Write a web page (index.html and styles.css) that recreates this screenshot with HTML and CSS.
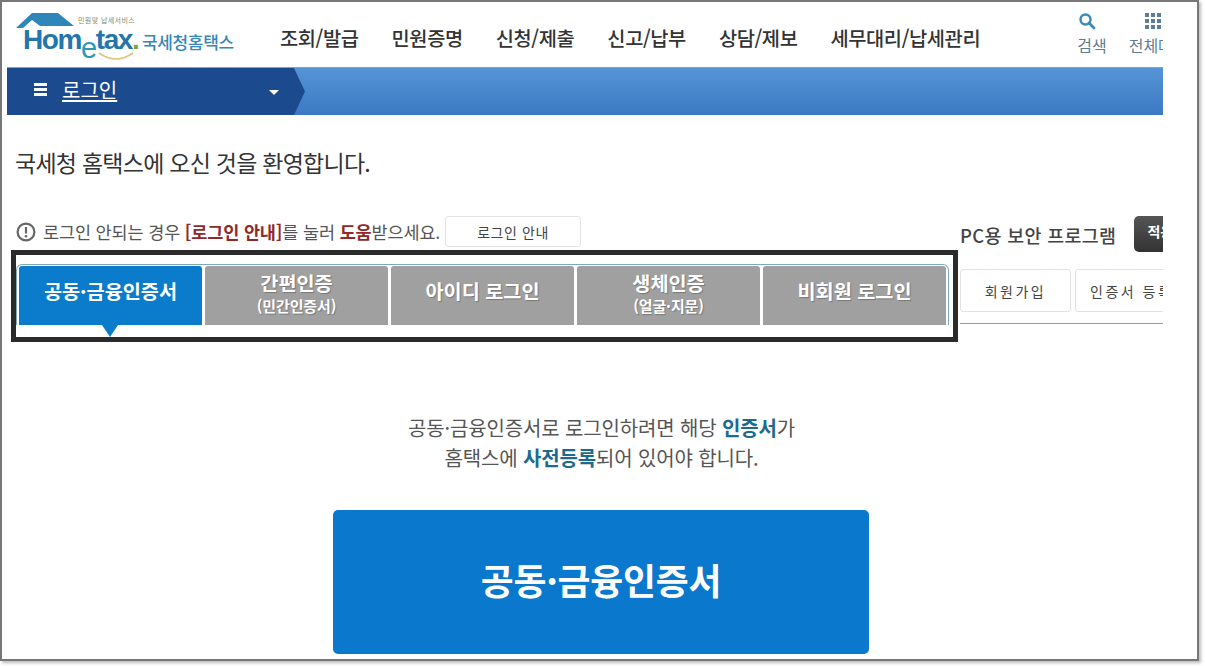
FILE: index.html
```html
<!DOCTYPE html>
<html lang="ko">
<head>
<meta charset="utf-8">
<title>국세청 홈택스 로그인</title>
<link rel="stylesheet" href="styles.css">
</head>
<body>
<div class="frame">
  <div class="page">
    <header class="topbar">
      <a class="logo">
        <svg class="logo-roof" width="60" height="18" viewBox="0 0 60 18"><path d="M0 16 L16 1 H42 L58 14 H24 L16 8 L7 16 Z" fill="#2f86b8"/></svg>
        <svg class="logo-smile" width="36" height="10" viewBox="0 0 36 10"><path d="M1 1 Q18 13 35 1" fill="none" stroke="#e0c27a" stroke-width="1.6"/></svg>
        <span class="logo-tag">민원맞 납세서비스</span>
        <span class="logo-en">Hom<span class="logo-e">e</span>tax<span class="logo-dot">.</span></span>
        <span class="logo-ko">국세청홈택스</span>
      </a>
      <nav class="gnb">
        <span>조회/발급</span><span>민원증명</span><span>신청/제출</span><span>신고/납부</span><span>상담/제보</span><span>세무대리/납세관리</span>
      </nav>
      <div class="tools">
        <div class="tool">
          <svg width="18" height="18" viewBox="0 0 18 18"><circle cx="7.5" cy="7.5" r="5" fill="none" stroke="#3b8bb5" stroke-width="2.4"/><path d="M11 11l5 5" stroke="#3b8bb5" stroke-width="2.8" stroke-linecap="round"/></svg>
          <span>검색</span>
        </div>
        <div class="tool">
          <svg width="18" height="18" viewBox="0 0 18 18" fill="#5c7f99"><rect x="1" y="1" width="4" height="4"/><rect x="7" y="1" width="4" height="4"/><rect x="13" y="1" width="4" height="4"/><rect x="1" y="7" width="4" height="4"/><rect x="7" y="7" width="4" height="4"/><rect x="13" y="7" width="4" height="4"/><rect x="1" y="13" width="4" height="4"/><rect x="7" y="13" width="4" height="4"/><rect x="13" y="13" width="4" height="4"/></svg>
          <span>전체메뉴</span>
        </div>
      </div>
    </header>

    <div class="crumb">
      <div class="crumb-current">
        <span class="burger"><i></i><i></i><i></i></span>
        <span class="crumb-title">로그인</span>
        <span class="crumb-caret"></span>
      </div>
    </div>

    <h1 class="welcome">국세청 홈택스에 오신 것을 환영합니다.</h1>

    <section class="login-area">
      <div class="login-left">
        <div class="help">
          <svg width="20" height="20" viewBox="0 0 20 20"><circle cx="10" cy="10" r="8.4" fill="none" stroke="#666" stroke-width="2.2"/><path d="M10 5v6.5" stroke="#666" stroke-width="2.2"/><circle cx="10" cy="14.3" r="1.3" fill="#666"/></svg>
          <p>로그인 안되는 경우 <b>[로그인 안내]</b>를 눌러 <b>도움</b>받으세요.</p>
          <button class="guide-btn">로그인 안내</button>
        </div>
        <div class="tab-box">
          <div class="tabs">
            <div class="tab single active">공동·금융인증서</div>
            <div class="tab">간편인증<small>(민간인증서)</small></div>
            <div class="tab single">아이디 로그인</div>
            <div class="tab">생체인증<small>(얼굴·지문)</small></div>
            <div class="tab single">비회원 로그인</div>
          </div>
        </div>
      </div>
      <div class="login-right">
        <div class="security">
          <span>PC용 보안 프로그램</span>
          <button class="apply-btn">적용</button>
        </div>
        <div class="actions">
          <button class="action-btn join">회원가입</button>
          <button class="action-btn cert">인증서 등록</button>
        </div>
      </div>
    </section>

    <p class="notice">공동·금융인증서로 로그인하려면 해당 <b>인증서</b>가<br>홈택스에 <b>사전등록</b>되어 있어야 합니다.</p>
    <button class="cert-login">공동·금융인증서</button>
  </div>
</div>
</body>
</html>
```

FILE: styles.css
```css
* { box-sizing: border-box; }
html, body { margin: 0; height: 100%; background: #fff; overflow: hidden; }
body {
  font-family: "Noto Sans CJK KR", "Noto Sans", sans-serif;
  color: #333;
}
.frame {
  width: 1199px;
  height: 661px;
  margin: 0;
  border: 2px solid #777;
  box-shadow: 2px 2px 3px #bbb;
  padding-left: 5px;
  background: #fff;
  overflow: hidden;
}
.page { width: 1156px; height: 100%; overflow: hidden; }

/* header */
.topbar { display: flex; height: 65px; align-items: flex-start; }
.logo { position: relative; display: block; width: 263px; height: 65px; flex: none; }
.logo-roof { position: absolute; left: 9px; top: 10px; }
.logo-smile { position: absolute; left: 91px; top: 50px; }
.logo-tag { position: absolute; left: 71px; top: 14px; font-size: 7px; color: #7a8a70; letter-spacing: .4px; white-space: nowrap; line-height: 9px; }
.logo-en {
  position: absolute; left: 16px; top: 25px;
  font: 700 28px/24px "Liberation Sans", sans-serif;
  letter-spacing: -1.4px; color: #2276ab; white-space: nowrap;
}
.logo-e { color: #2a9bb7; font-size: 29px; position: relative; top: 9px; font-weight: 400; }
.logo-dot { color: #7ea63a; }
.logo-ko {
  position: absolute; left: 135px; top: 28px;
  font-size: 17px; line-height: 24px; letter-spacing: -.35px; color: #3587b8; font-weight: 500; white-space: nowrap;
}
.gnb {
  display: flex; gap: 33px; margin-top: 22px; margin-left: 10px;
  font-size: 19.8px; line-height: 27px; font-weight: 500; color: #333; letter-spacing: -.4px;
  white-space: nowrap; flex: none;
}
.tools { display: flex; gap: 22px; margin-left: 97px; margin-top: 10px; flex: none; }
.tool { display: flex; flex-direction: column; align-items: center; gap: 5px; font-size: 16px; line-height: 21px; color: #5f7d92; white-space: nowrap; }
.tool svg { display: block; margin-right: 10px; }

/* location bar */
.crumb {
  height: 48px;
  background: linear-gradient(#5594d6, #3b7ac2);
  border-top: 1px solid #7da3cc;
}
.crumb-current {
  display: flex; align-items: center;
  width: 298px; height: 100%;
  padding-left: 27px; padding-bottom: 4px;
  background: #1c4a8e;
  clip-path: polygon(0 0, 287px 0, 100% 50%, 287px 100%, 0 100%);
  color: #fff;
}
.burger { display: flex; flex-direction: column; gap: 2px; width: 13px; }
.burger i { display: block; height: 3px; background: #fff; }
.crumb-title {
  margin-left: 15px; font-size: 20px; line-height: 26px;
  text-decoration: underline; text-underline-offset: 2px;
}
.crumb-caret {
  margin-left: 152px; margin-top: 6px; width: 0; height: 0;
  border: 5px solid transparent; border-top: 5px solid #fff; border-bottom: 0;
}

/* title */
.welcome {
  margin: 31px 0 0 8px;
  font-size: 23px; line-height: 32px; font-weight: 400; color: #333; letter-spacing: -.75px;
}

/* login region */
.login-area { display: flex; margin-top: 38px; height: 127px; }
.login-left { width: 953px; flex: none; }
.help { display: flex; align-items: center; height: 34px; padding-left: 9px; padding-bottom: 3px; }
.help svg { flex: none; }
.help p { margin: 0 0 0 7px; font-size: 17.5px; line-height: 24px; color: #555; letter-spacing: -.15px; white-space: nowrap; }
.help b { color: #8e2a2a; font-weight: 700; }
.guide-btn {
  margin-left: 5px; width: 136px; height: 31px;
  background: #fff; border: 1px solid #e4e4e4; border-radius: 3px;
  font: 400 14px "Noto Sans CJK KR", sans-serif; color: #444; letter-spacing: .6px;
}
.tab-box {
  width: 947px; height: 92px; margin-left: 4px;
  border: 5px solid #2b2b2b;
  padding: 9px 4px 0 0;
}
.tabs {
  display: flex; gap: 3px; height: 61px;
  padding: 1px 2px 0 2px;
  border: 1px solid #7ea9bd; border-bottom: 0;
  border-radius: 6px 6px 0 0;
}
.tab {
  position: relative;
  flex: 1 1 0;
  display: flex; flex-direction: column; align-items: center; justify-content: center;
  padding-bottom: 6px;
  background: #a0a0a0; color: #fff;
  border-radius: 3px 3px 0 0;
  font-size: 19.7px; line-height: 24px; font-weight: 700; letter-spacing: 0;
  text-shadow: 1px 1px 1px rgba(0,0,0,.25);
}
.tab.single { padding-bottom: 10px; }
.tab small { margin-top: 2px; font-size: 15px; line-height: 18px; font-weight: 700; letter-spacing: -.1px; }
.tab.active { background: #0a7ccb; text-shadow: none; }
.tab.active::after {
  content: ""; position: absolute; left: 83px; top: 100%;
  border: 8px solid transparent; border-top: 12px solid #0a7ccb; border-bottom: 0;
}

.login-right { flex: none; width: 203px; }
.security { display: flex; align-items: flex-start; height: 53px; white-space: nowrap; }
.security span { margin-top: 6px; font-size: 18.4px; line-height: 26px; font-weight: 500; color: #444; letter-spacing: .35px; }
.apply-btn {
  flex: none; margin-left: 18px; width: 60px; height: 36px; padding: 0 0 6px 13px;
  background: linear-gradient(#555, #333); border: 0; border-radius: 5px; text-align: left;
  font: 700 14px "Noto Sans CJK KR", sans-serif; color: #fff;
}
.actions {
  display: flex; gap: 4px; height: 55px; padding-bottom: 12px;
  border-bottom: 1px solid #8aa0a8;
  white-space: nowrap;
}
.action-btn {
  flex: none; height: 43px; background: #fff; border: 1px solid #e2e2e2; border-radius: 3px;
  font: 400 14px "Noto Sans CJK KR", sans-serif; color: #444; letter-spacing: 2.5px;
}
.join { width: 111px; }
.cert { width: 110px; text-align: left; padding-left: 14px; }

/* notice */
.notice {
  margin: 70px 0 0; text-align: center; padding-left: 189px; width: 1000px;
  font-size: 20px; line-height: 30px; color: #555; letter-spacing: -.15px;
}
.notice b { color: #1c6a8e; font-weight: 700; }
.cert-login {
  display: block; margin: 37px 0 0 326px;
  width: 536px; height: 144px; padding-bottom: 8px;
  background: #0a78cd; border: 0; border-radius: 5px;
  font: 700 35.8px "Noto Sans CJK KR", sans-serif; color: #fff; letter-spacing: -.2px;
}
```
